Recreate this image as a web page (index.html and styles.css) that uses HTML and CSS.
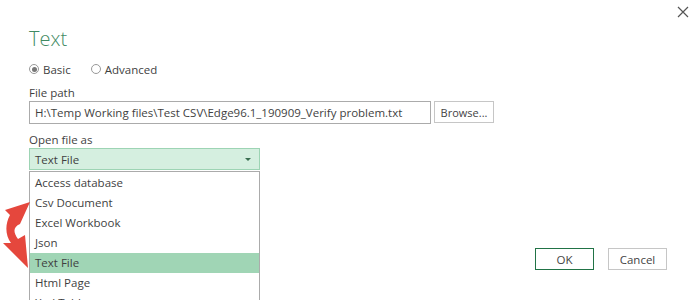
FILE: index.html
```html
<!DOCTYPE html>
<html lang="en">
<head>
    <meta charset="UTF-8">
    <title>Text</title>
    <link rel="stylesheet" href="styles.css">
</head>
<body>
    <div class="dialog">
        <button class="close" aria-label="Close">
            <svg width="12" height="12" viewBox="0 0 12 12"><path d="M1 1 L11 11 M11 1 L1 11" stroke="#555" stroke-width="1.2"/></svg>
        </button>

        <h1 class="title">Text</h1>

        <div class="radios">
            <label class="radio"><span class="dot checked"></span>Basic</label>
            <label class="radio"><span class="dot"></span>Advanced</label>
        </div>

        <div class="field-label">File path</div>
        <div class="path-row">
            <div class="path-input">H:\Temp Working files\Test CSV\Edge96.1_190909_Verify problem.txt</div>
            <button class="btn browse">Browse...</button>
        </div>

        <div class="field-label second">Open file as</div>
        <div class="select-wrap">
            <div class="select">
                <span>Text File</span>
                <span class="caret"></span>
            </div>
            <ul class="options">
                <li>Access database</li>
                <li>Csv Document</li>
                <li>Excel Workbook</li>
                <li>Json</li>
                <li class="active">Text File</li>
                <li>Html Page</li>
                <li>Xml Table</li>
            </ul>
        </div>

        <div class="footer">
            <button class="btn ok">OK</button>
            <button class="btn">Cancel</button>
        </div>

        <!-- red annotation arrow -->
        <svg class="arrow" width="40" height="80" viewBox="0 0 40 80">
            <path d="M30 4 L5 12 L10 17 C5 26 5 37 11 45 L3 45 L28 70 L25 37 L18 41 C13 34 13 29 20 26 Z" fill="#e5473d"/>
        </svg>
    </div>
</body>
</html>
```

FILE: styles.css
```css
/* Base */
body {
    margin: 0;
    background: white;
    font-family: 'Open Sans', 'Noto Sans', sans-serif;
    font-size: 11.5px;
    color: #3f3f3f;
    overflow: hidden;
}

.dialog {
    position: relative;
    height: 300px;
    padding: 27px 31px 0 29px;
    box-sizing: border-box;
}

/* Close button */
.close {
    position: absolute;
    top: 5px;
    right: 8px;
    border: none;
    background: none;
    padding: 0;
    width: 14px;
    height: 14px;
    display: flex;
    align-items: center;
    justify-content: center;
}

/* Title */
.title {
    margin: 0;
    font-size: 20px;
    font-weight: 300;
    line-height: 24px;
    color: #3f8a63;
}

/* Radios */
.radios {
    display: flex;
    gap: 20px;
    margin-top: 11px;
    height: 14px;
    align-items: center;
}

.radio {
    display: flex;
    align-items: center;
    gap: 4px;
}

.dot {
    width: 10px;
    height: 10px;
    border: 1px solid #999;
    border-radius: 50%;
    box-sizing: border-box;
    display: inline-block;
    position: relative;
}

.dot.checked::after {
    content: '';
    position: absolute;
    top: 1.5px;
    left: 1.5px;
    width: 5px;
    height: 5px;
    border-radius: 50%;
    background: #777;
}

/* Fields */
.field-label {
    margin-top: 9px;
    height: 16px;
    line-height: 16px;
}

.field-label.second {
    margin-top: 8px;
}

.path-row {
    display: flex;
    gap: 3px;
}

.path-input {
    width: 402px;
    height: 23px;
    box-sizing: border-box;
    border: 1px solid #ababab;
    padding: 0 5px;
    line-height: 21px;
    white-space: nowrap;
    overflow: hidden;
}

.btn {
    font-family: inherit;
    font-size: 11.5px;
    color: #444;
    background: white;
    border: 1px solid #c6c6c6;
    height: 22px;
    width: 60px;
    padding: 0;
}

.browse {
    font-size: 11px;
}

/* Select */
.select-wrap {
    position: relative;
    width: 231px;
}

.select {
    height: 22px;
    box-sizing: border-box;
    background: #d5efe0;
    border: 1px solid #9dd4b4;
    display: flex;
    align-items: center;
    justify-content: space-between;
    padding: 0 8px 0 5px;
}

.caret {
    width: 0;
    height: 0;
    border-left: 3px solid transparent;
    border-right: 3px solid transparent;
    border-top: 3px solid #3a6e50;
}

.options {
    position: absolute;
    top: 23px;
    left: 0;
    width: 231px;
    box-sizing: border-box;
    margin: 0;
    padding: 1px 0 0;
    list-style: none;
    background: white;
    border: 1px solid #ababab;
    border-bottom: none;
    z-index: 5;
}

.options li {
    height: 20px;
    line-height: 20px;
    padding-left: 5px;
}

.options li.active {
    background: #a0d5b5;
}

/* Footer */
.footer {
    display: flex;
    justify-content: flex-end;
    gap: 14px;
    margin-top: 78px;
}

.footer .btn {
    width: 59px;
}

.ok {
    border-color: #217346;
}

/* Annotation */
.arrow {
    position: absolute;
    left: 0;
    top: 198px;
    z-index: 10;
}
```
